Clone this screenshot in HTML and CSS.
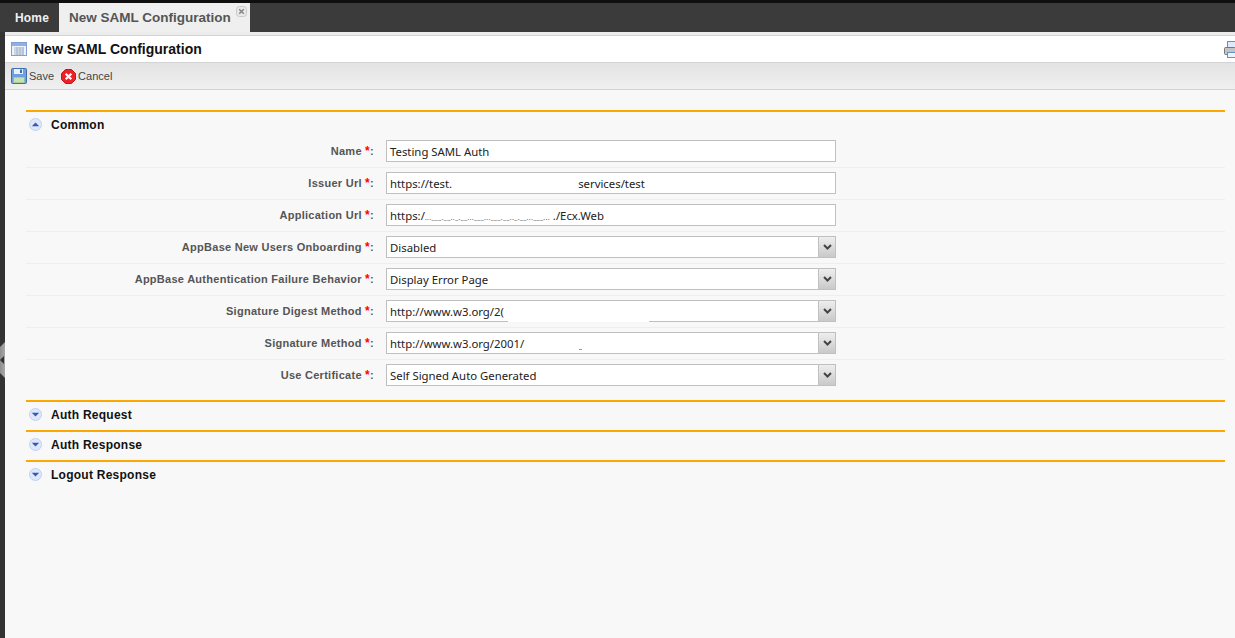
FILE: index.html
```html
<!DOCTYPE html>
<html lang="en">
<head>
<meta charset="utf-8">
<title>New SAML Configuration</title>
<link rel="stylesheet" href="styles.css">
</head>
<body>
<div class="topline"></div>
<nav class="tabs">
  <div class="tab-home">Home</div>
  <div class="tab-active">New SAML Configuration
    <svg class="tab-close" width="11" height="11" viewBox="0 0 11 11"><rect x="0.5" y="0.5" width="10" height="10" rx="3" fill="#e9e9e9" stroke="#c8c8c8"/><path d="M3.200 3.200l4.600 4.600M7.800 3.200l-4.600 4.600" stroke="#888" stroke-width="1.600"/></svg>
  </div>
</nav>
<div class="frame">
  <div class="tabstrip"></div>
  <header class="titlebar">
    <svg class="title-icon" width="16" height="14" viewBox="0 0 16 14"><rect x="0.5" y="0.5" width="15" height="13" fill="#eef3fb" stroke="#7f9fd6"/><rect x="1" y="1" width="14" height="3" fill="#8fb0e6"/><path d="M3 6h10M3 8h10M3 10h10M3 12h10M6 5v8M9 5v8M12 5v8" stroke="#9aa9c4" stroke-width="0.8"/></svg>
    <h1 class="title">New SAML Configuration</h1>
    <svg class="print-icon" width="11" height="17" viewBox="0 0 11 17"><rect x="3.500" y="0.500" width="8" height="8" fill="#dcebfb" stroke="#5f93cf"/><rect x="0.500" y="6.500" width="11" height="7" rx="1" fill="#c4c4c4" stroke="#777"/><rect x="3.500" y="11.500" width="8" height="5" fill="#eef4fb" stroke="#5f93cf"/></svg>
  </header>
  <div class="toolbar">
    <button class="tool">
      <svg width="16" height="16" viewBox="0 0 16 16"><rect x="0.5" y="0.5" width="15" height="15" rx="1" fill="#6f9fdc" stroke="#3d6fae"/><rect x="3" y="1" width="9" height="5" fill="#e9f0f9"/><rect x="9" y="1.500" width="2" height="3.500" fill="#3d6fae"/><rect x="2.500" y="9" width="11" height="6" fill="#a9d18e"/><path d="M3 11h10M3 13h10" stroke="#fff" stroke-width="0.7"/></svg>
      Save
    </button>
    <button class="tool">
      <svg width="15" height="15" viewBox="0 0 15 15"><path d="M4.500 0.500h6l4 4v6l-4 4h-6l-4-4v-6z" fill="#e8232a" stroke="#c9141a"/><path d="M4.700 4.700l5.600 5.600M10.300 4.700l-5.600 5.600" stroke="#fff" stroke-width="2.200"/></svg>
      Cancel
    </button>
  </div>
  <main class="content">
    <section class="section">
      <h2 class="section-head">
        <svg class="chevron" width="13" height="13" viewBox="0 0 13 13"><circle cx="6.500" cy="6.500" r="6" fill="#dde9fb" stroke="#bcd2f2"/><path d="M2.800 8.200h7.400L6.500 4.400z" fill="#3a57b5"/></svg>
        Common
      </h2>
      <div class="form">
        <div class="row"><label class="label">Name <b>*</b>:</label><div class="field">Testing SAML Auth</div></div>
        <div class="row"><label class="label">Issuer Url <b>*</b>:</label><div class="field">https://test.<span class="gap-issuer"></span>services/test</div></div>
        <div class="row"><label class="label">Application Url <b>*</b>:</label><div class="field">https:/<span class="smudge">...___.__.._.__...___...___.__.._.__...___...</span> ./Ecx.Web</div></div>
        <div class="row"><label class="label">AppBase New Users Onboarding <b>*</b>:</label><div class="field select">Disabled<span class="arrow"><svg width="9" height="6" viewBox="0 0 9 6"><path d="M1 1l3.500 3.500L8 1" fill="none" stroke="#444" stroke-width="2"/></svg></span></div></div>
        <div class="row"><label class="label">AppBase Authentication Failure Behavior <b>*</b>:</label><div class="field select">Display Error Page<span class="arrow"><svg width="9" height="6" viewBox="0 0 9 6"><path d="M1 1l3.500 3.500L8 1" fill="none" stroke="#444" stroke-width="2"/></svg></span></div></div>
        <div class="row"><label class="label">Signature Digest Method <b>*</b>:</label><div class="field select">http://www.w3.org/2(<span class="mask-digest"></span><span class="arrow"><svg width="9" height="6" viewBox="0 0 9 6"><path d="M1 1l3.500 3.500L8 1" fill="none" stroke="#444" stroke-width="2"/></svg></span></div></div>
        <div class="row"><label class="label">Signature Method <b>*</b>:</label><div class="field select">http://www.w3.org/2001/<span class="tick"></span><span class="arrow"><svg width="9" height="6" viewBox="0 0 9 6"><path d="M1 1l3.500 3.500L8 1" fill="none" stroke="#444" stroke-width="2"/></svg></span></div></div>
        <div class="row row-last"><label class="label">Use Certificate <b>*</b>:</label><div class="field select">Self Signed Auto Generated<span class="arrow"><svg width="9" height="6" viewBox="0 0 9 6"><path d="M1 1l3.500 3.500L8 1" fill="none" stroke="#444" stroke-width="2"/></svg></span></div></div>
      </div>
    </section>
    <section class="section">
      <h2 class="section-head">
        <svg class="chevron" width="13" height="13" viewBox="0 0 13 13"><circle cx="6.500" cy="6.500" r="6" fill="#dde9fb" stroke="#bcd2f2"/><path d="M2.800 4.800h7.400L6.500 8.600z" fill="#3a57b5"/></svg>
        Auth Request
      </h2>
    </section>
    <section class="section">
      <h2 class="section-head">
        <svg class="chevron" width="13" height="13" viewBox="0 0 13 13"><circle cx="6.500" cy="6.500" r="6" fill="#dde9fb" stroke="#bcd2f2"/><path d="M2.800 4.800h7.400L6.500 8.600z" fill="#3a57b5"/></svg>
        Auth Response
      </h2>
    </section>
    <section class="section">
      <h2 class="section-head">
        <svg class="chevron" width="13" height="13" viewBox="0 0 13 13"><circle cx="6.500" cy="6.500" r="6" fill="#dde9fb" stroke="#bcd2f2"/><path d="M2.800 4.800h7.400L6.500 8.600z" fill="#3a57b5"/></svg>
        Logout Response
      </h2>
    </section>
  </main>
</div>
<div class="collapse-handle"><svg width="4" height="8" viewBox="0 0 4 8"><path d="M4 0v8L0 4z" fill="#333"/></svg></div>
</body>
</html>
```
FILE: styles.css
```css
* { box-sizing: border-box; }
html, body { height: 100%; }
body {
  margin: 0;
  background: #333;
  font-family: "Liberation Sans", Arial, sans-serif;
  overflow: hidden;
  position: relative;
  display: flex;
  flex-direction: column;
}
.topline { height: 3px; background: #0f0f0f; flex: none; }
.tabs {
  height: 29px;
  flex: none;
  display: flex;
  background: #3b3b3b;
  padding-left: 5px;
}
.tab-home {
  width: 54px;
  padding-top: 8px;
  text-align: center;
  color: #f0f0f0;
  font-size: 12px;
  font-weight: bold;
  letter-spacing: 0.2px;
}
.tab-active {
  width: 191px;
  background: #efefef;
  color: #555;
  font-size: 13.500px;
  font-weight: bold;
  padding: 7px 0 0 10px;
  position: relative;
}
.tab-close { position: absolute; right: 3px; top: 3px; }
.frame {
  flex: 1;
  margin-left: 5px;
  min-height: 0;
  display: flex;
  flex-direction: column;
  background: #f8f8f8;
}
.tabstrip { height: 3px; flex: none; background: #ececec; }
.titlebar {
  height: 28px;
  flex: none;
  background: #fff;
  border-top: 1px solid #d4d4d4;
  border-bottom: 1px solid #d4d4d4;
  display: flex;
  align-items: center;
  padding-left: 6px;
}
.title-icon { flex: none; }
.title {
  margin: 0 0 0 7px;
  font-size: 14px;
  font-weight: bold;
  color: #111;
  flex: 1;
}
.print-icon { flex: none; }
.toolbar {
  height: 27px;
  flex: none;
  background: linear-gradient(#e3e3e3, #f0f0f0);
  border-bottom: 1px solid #d2d2d2;
  display: flex;
  align-items: center;
  padding-left: 6px;
  gap: 7px;
}
.tool {
  border: 0;
  background: none;
  padding: 0;
  display: flex;
  align-items: center;
  gap: 2px;
  font: 11px "Liberation Sans", Arial, sans-serif;
  color: #444;
}
.content { padding: 20px 10px 0 21px; }
.section { border-top: 2px solid #fca800; padding-bottom: 4px; }
.section-head {
  margin: 0;
  height: 24px;
  display: flex;
  align-items: center;
  padding: 2px 0 0 3px;
  gap: 9px;
  font-size: 12px;
  font-weight: bold;
  color: #111;
  letter-spacing: 0.25px;
}
.chevron { flex: none; margin-top: -2px; }
.form { padding-bottom: 4px; }
.row {
  height: 32px;
  display: flex;
  align-items: center;
  padding-bottom: 1px;
  border-bottom: 1px solid #eeeeee;
}
.row-last { border-bottom-color: transparent; }
.label {
  width: 348px;
  flex: none;
  text-align: right;
  font-size: 11px;
  font-weight: bold;
  color: #555;
  letter-spacing: 0.27px;
}
.label b { color: #f00; font-size: 12px; }
.field {
  margin-left: 12px;
  width: 450px;
  height: 22px;
  border: 1px solid #c0c0c0;
  background: #fff;
  padding: 3px 0 0 3px;
  font-family: "Noto Sans", sans-serif;
  font-size: 11.350px;
  line-height: 16px;
  color: #222;
  position: relative;
  white-space: nowrap;
}
.gap-issuer { display: inline-block; width: 126px; }
.smudge { font-size: 7px; color: #666; letter-spacing: 0.3px; }
.mask-digest {
  position: absolute;
  background: #fff;
  left: 121px;
  width: 141px;
  top: 0;
  bottom: -1px;
}
.tick {
  position: absolute;
  left: 192px;
  bottom: 3px;
  width: 3px;
  height: 1px;
  background: #999;
}
.arrow {
  position: absolute;
  right: 0;
  top: 0;
  bottom: 0;
  width: 17px;
  background: linear-gradient(#eeeeee, #c9c9c9);
  border-left: 1px solid #c0c0c0;
  display: flex;
  align-items: center;
  justify-content: center;
}
.collapse-handle {
  position: absolute;
  left: 0;
  top: 342px;
  width: 5px;
  height: 36px;
  background: linear-gradient(90deg, #8e8e8e, #a8a8a8);
  clip-path: polygon(0 5px, 100% 0, 100% 100%, 0 calc(100% - 5px));
  display: flex;
  align-items: center;
}
```
